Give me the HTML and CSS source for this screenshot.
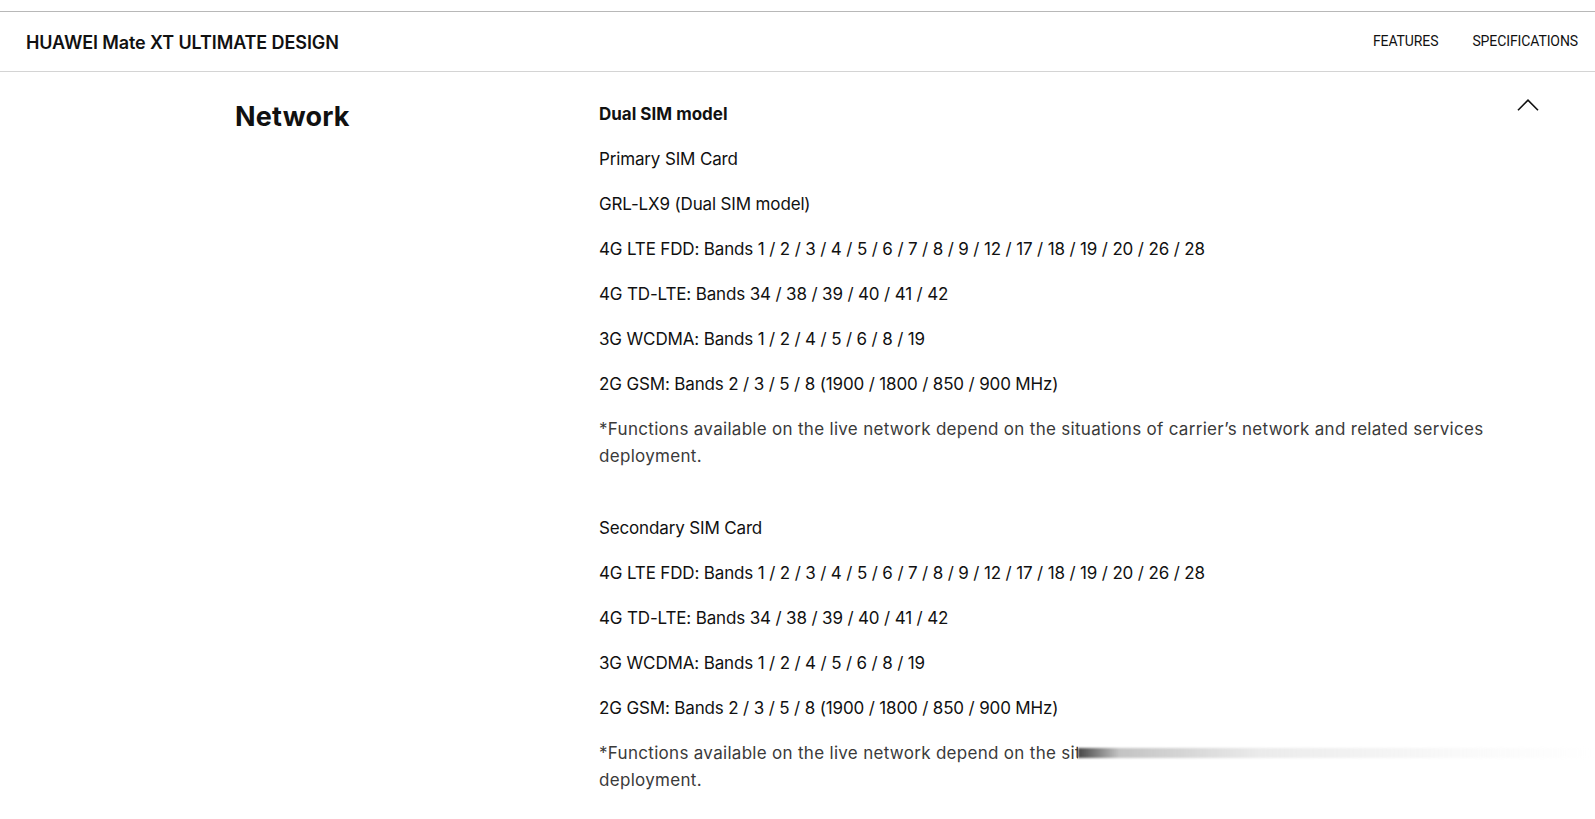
FILE: index.html
```html
<!DOCTYPE html>
<html>
<head>
<meta charset="utf-8">
<link rel="stylesheet" href="styles.css">
</head>
<body>
<div class="topbar"></div>
<header class="header">
  <div class="brand">HUAWEI Mate XT ULTIMATE DESIGN</div>
  <nav class="nav">
    <a class="nav-link">FEATURES</a>
    <a class="nav-link">SPECIFICATIONS</a>
  </nav>
</header>
<main class="spec">
  <h2 class="spec-title">Network</h2>
  <div class="spec-body">
    <p class="line strong">Dual SIM model</p>
    <p class="line">Primary SIM Card</p>
    <p class="line">GRL-LX9 (Dual SIM model)</p>
    <p class="line">4G LTE FDD: Bands 1 / 2 / 3 / 4 / 5 / 6 / 7 / 8 / 9 / 12 / 17 / 18 / 19 / 20 / 26 / 28</p>
    <p class="line">4G TD-LTE: Bands 34 / 38 / 39 / 40 / 41 / 42</p>
    <p class="line">3G WCDMA: Bands 1 / 2 / 4 / 5 / 6 / 8 / 19</p>
    <p class="line">2G GSM: Bands 2 / 3 / 5 / 8 (1900 / 1800 / 850 / 900 MHz)</p>
    <p class="line note gap">*Functions available on the live network depend on the situations of carrier’s network and related services deployment.</p>
    <p class="line">Secondary SIM Card</p>
    <p class="line">4G LTE FDD: Bands 1 / 2 / 3 / 4 / 5 / 6 / 7 / 8 / 9 / 12 / 17 / 18 / 19 / 20 / 26 / 28</p>
    <p class="line">4G TD-LTE: Bands 34 / 38 / 39 / 40 / 41 / 42</p>
    <p class="line">3G WCDMA: Bands 1 / 2 / 4 / 5 / 6 / 8 / 19</p>
    <p class="line">2G GSM: Bands 2 / 3 / 5 / 8 (1900 / 1800 / 850 / 900 MHz)</p>
    <p class="line note">*Functions available on the live network depend on the situations of carrier’s network and related services deployment.</p>
  </div>
  <button class="toggle" aria-label="collapse">
    <svg width="22" height="12" viewBox="0 0 22 12"><path d="M1 11.2 L11 1.2 L21 11.2" fill="none" stroke="#111" stroke-width="1.6"/></svg>
  </button>
</main>
<div class="smear"><div class="smear-bar"></div></div>
</body>
</html>
```

FILE: styles.css
```css
html, body {
  margin: 0;
  padding: 0;
  background: #fff;
  overflow: hidden;
}
body {
  font-family: Inter, "Noto Sans", sans-serif;
  color: #111;
  height: 819px;
  position: relative;
}
.topbar {
  height: 11px;
  border-bottom: 1px solid #b8b8b8;
}
.header {
  height: 59px;
  display: flex;
  align-items: center;
  justify-content: space-between;
  padding: 0 17px 0 26px;
  border-bottom: 1px solid #d4d4d4;
}
.brand {
  font-size: 18px;
  font-weight: 600;
  letter-spacing: -0.1px;
  padding-top: 1px;
}
.nav {
  display: flex;
  gap: 34px;
  padding-bottom: 1px;
}
.nav-link {
  font-family: Roboto, sans-serif;
  font-size: 14px;
  letter-spacing: -0.1px;
  color: #111;
}
.spec {
  display: flex;
  padding: 29px 56px 0 235px;
}
.spec-title {
  width: 364px;
  flex: none;
  margin: 0;
  font-size: 27px;
  font-weight: 700;
  line-height: 32px;
  letter-spacing: 0.2px;
}
.spec-body {
  flex: 1;
  padding-right: 0;
}
.line {
  margin: 0 0 18px;
  font-size: 17px;
  line-height: 27px;
  letter-spacing: -0.15px;
}
.strong {
  font-weight: 700;
  letter-spacing: 0;
}
.note {
  color: #3a3a3a;
  letter-spacing: 0.3px;
  font-weight: 400;
}
.gap {
  margin-bottom: 45px;
}
.toggle {
  flex: none;
  border: 0;
  background: none;
  padding: 0;
  width: 22px;
  height: 12px;
  margin-top: -2px;
}
.smear {
  position: absolute;
  left: 1078px;
  top: 740px;
  width: 517px;
  height: 26px;
  background: #fff;
  display: flex;
  align-items: center;
}
.smear-bar {
  width: 100%;
  height: 10px;
  background: linear-gradient(90deg, rgba(60,60,60,0.95) 0%, rgba(170,170,170,0.7) 8%, rgba(215,215,215,0.5) 35%, rgba(238,238,238,0.3) 75%, rgba(255,255,255,0) 100%);
  filter: blur(1.2px);
}
```
